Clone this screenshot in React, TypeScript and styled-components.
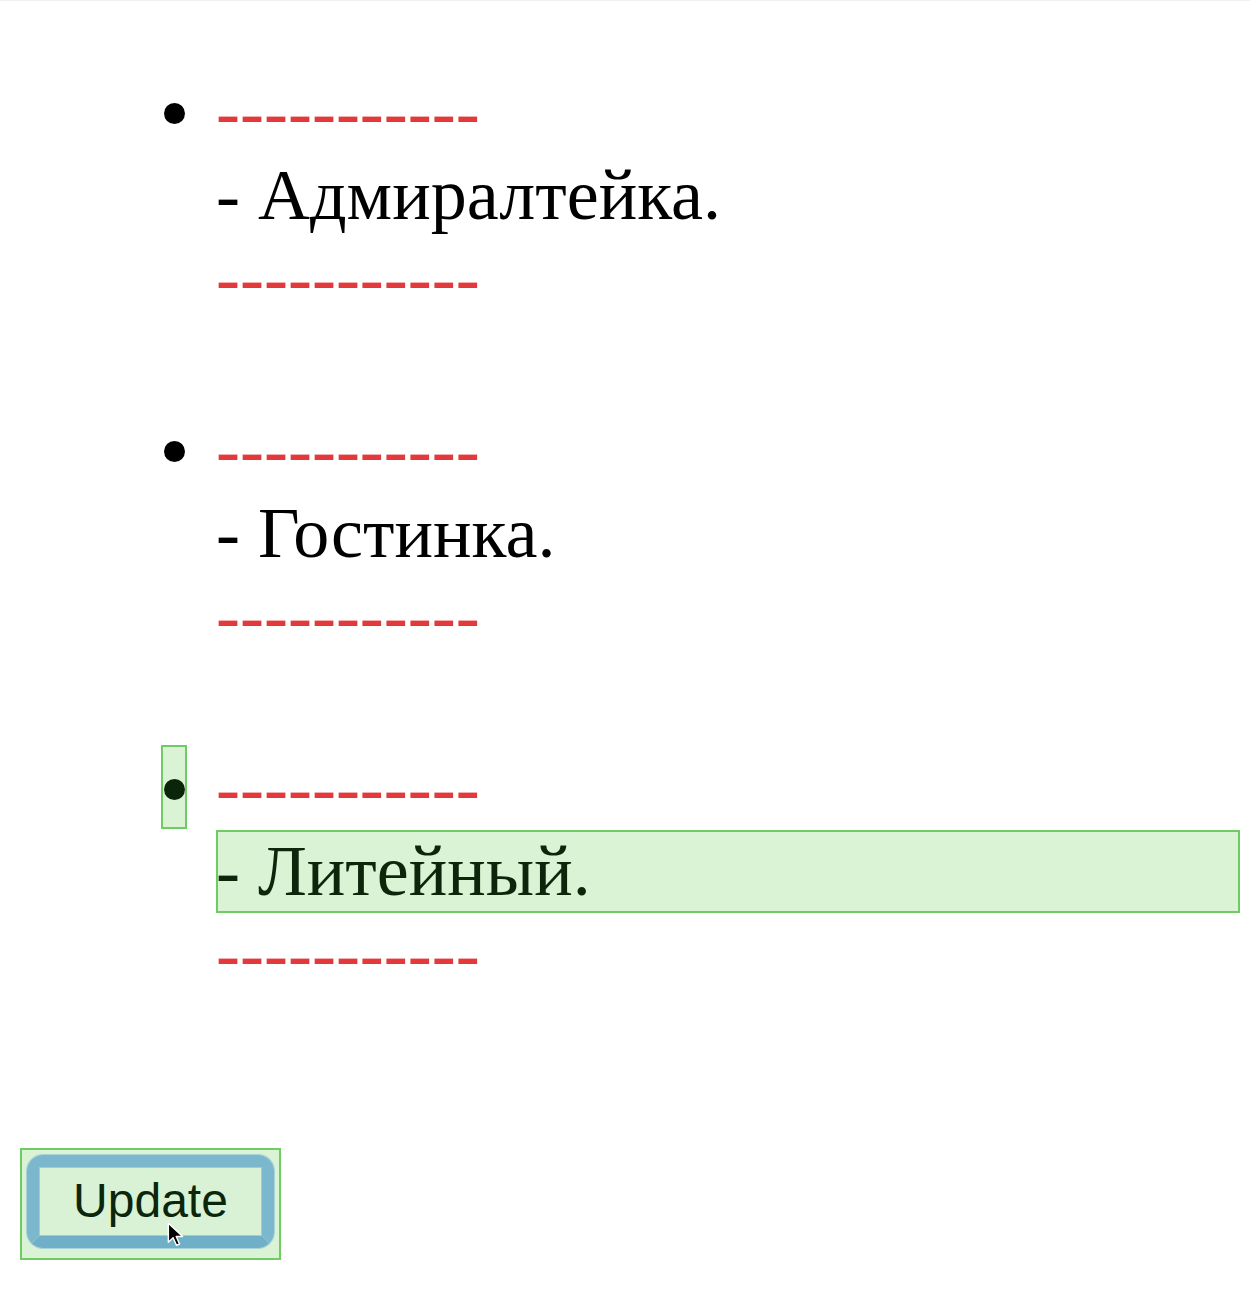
import * as React from 'react';
import styled, { createGlobalStyle, css } from 'styled-components';

const GlobalStyle = createGlobalStyle`
  html, body {
    margin: 0;
    padding: 0;
    background: #ffffff;
  }
  body {
    font-family: "Liberation Serif", "Times New Roman", serif;
    color: #000000;
  }
`;

const highlight = css`
  background: #daf3d4;
  box-shadow: inset 0 0 0 2px #6fcc62;
  color: #0c260c;
`;

const Page = styled.div`
  border-top: 1px solid #f0f0f0;
  padding: 70px 10px 40px 20px;
  min-height: 1300px;
  box-sizing: border-box;
`;

const List = styled.ul`
  list-style: none;
  margin: 0;
  padding: 0 0 0 141px;
`;

const Item = styled.li`
  display: flex;
  align-items: flex-start;
  gap: 29px;
  margin-bottom: 89px;
`;

const Marker = styled.div<{ $active?: boolean }>`
  flex-shrink: 0;
  width: 26px;
  height: 84px;
  margin-top: -2px;
  display: flex;
  justify-content: center;
  padding-top: 34px;
  box-sizing: border-box;
  ${(p) => p.$active && highlight}
`;

const Bullet = styled.span<{ $active?: boolean }>`
  width: 21px;
  height: 21px;
  border-radius: 50%;
  background: ${(p) => (p.$active ? '#0b250b' : '#000000')};
`;

const Body = styled.div`
  flex-grow: 1;
  display: flex;
  flex-direction: column;
  font-size: 72px;
  line-height: 83px;
`;

const Divider = styled.div`
  color: #e3393a;
  white-space: nowrap;
`;

const Station = styled.div<{ $active?: boolean }>`
  white-space: nowrap;
  ${(p) => p.$active && highlight}
`;

const Footer = styled.div`
  margin-top: 152px;
  position: relative;
  width: 261px;
`;

const UpdateButton = styled.button`
  ${highlight}
  display: block;
  width: 261px;
  height: 112px;
  padding: 7px 7px 12px 7px;
  border: none;
  margin: 0;
  cursor: pointer;
  font-family: "Liberation Sans", Arial, Helvetica, sans-serif;
`;

const FocusRing = styled.span`
  display: block;
  height: 100%;
  box-sizing: border-box;
  border: 12px solid #7bb8ce;
  border-bottom-color: #6fafc8;
  border-radius: 16px;
  box-shadow: 0 0 0 1px #a9d3d6;
`;

const Face = styled.span`
  display: flex;
  align-items: center;
  justify-content: center;
  height: 100%;
  box-sizing: border-box;
  background: #d9f2d5;
  border: 1px solid #a3cfc0;
  font-size: 48px;
  line-height: 1;
  color: #0c260c;
  padding-bottom: 2px;
`;

const Cursor = styled.svg`
  position: absolute;
  left: 147px;
  top: 74px;
  width: 17px;
  height: 25px;
  pointer-events: none;
`;

const stations = ['Адмиралтейка', 'Гостинка', 'Литейный'];

export default function App() {
  return (
    <>
      <GlobalStyle />
      <Page>
        <List>
          {stations.map((name, i) => {
            const active = i === stations.length - 1;
            return (
              <Item key={name}>
                <Marker $active={active}>
                  <Bullet $active={active} />
                </Marker>
                <Body>
                  <Divider>-----------</Divider>
                  <Station $active={active}>- {name}.</Station>
                  <Divider>-----------</Divider>
                </Body>
              </Item>
            );
          })}
        </List>
        <Footer>
          <UpdateButton>
            <FocusRing>
              <Face>Update</Face>
            </FocusRing>
          </UpdateButton>
          <Cursor viewBox="0 0 14 21">
            <path
              d="M1 1 L1 17 L5 13.2 L7.8 19.6 L10.4 18.5 L7.6 12.2 L13 12.2 Z"
              fill="#000"
              stroke="#fff"
              strokeWidth="1.2"
              strokeLinejoin="round"
            />
          </Cursor>
        </Footer>
      </Page>
    </>
  );
}
